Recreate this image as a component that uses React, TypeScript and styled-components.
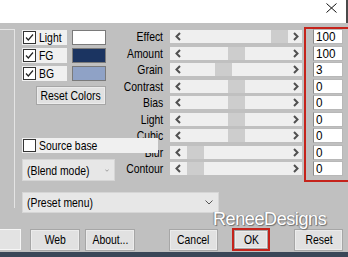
import styled, { createGlobalStyle } from 'styled-components';

const GlobalStyle = createGlobalStyle`
  html, body {
    margin: 0;
    padding: 0;
    background: #3a4758;
  }
  body {
    width: 348px;
    height: 257px;
    overflow: hidden;
    font-family: "Liberation Sans", Arial, sans-serif;
    font-size: 13px;
    color: #000;
  }
`;

const Window = styled.div`
  width: 348px;
  height: 252px;
  background: #c0c0c0;
  display: flex;
  flex-direction: column;
  position: relative;
  overflow: hidden;
`;

// the dialog font is a narrow sans; squeeze Liberation Sans to match
const T = styled.span<{ $o?: string; $s?: number }>`
  display: inline-block;
  white-space: nowrap;
  transform: scaleX(${(p) => p.$s || 0.8});
  transform-origin: ${(p) => p.$o || 'left'} center;
`;

const TitleBar = styled.div`
  height: 23px;
  background: #fff;
  border-right: 2px solid #4a4a4a;
  box-sizing: border-box;
  display: flex;
  justify-content: flex-end;
  align-items: flex-start;
  padding: 3px 9px 0 0;
`;

const Upper = styled.div`
  display: flex;
  align-items: flex-start;
`;

const EdgeBox = styled.div`
  flex: none;
  width: 15px;
  height: 179px;
  margin-top: 6px;
  border-top: 1px solid #e4e4e4;
  border-right: 1px solid #e4e4e4;
  box-sizing: border-box;
`;

const MainCol = styled.div`
  margin-left: 7px;
  display: flex;
  flex-direction: column;
  margin-top: 4px;
`;

const TopRow = styled.div`
  display: flex;
  align-items: flex-start;
`;

const LeftPanel = styled.div`
  width: 88px;
  padding-top: 3px;
  display: flex;
  flex-direction: column;
  flex: none;
`;

const ColorRow = styled.div`
  display: flex;
  align-items: center;
  height: 15px;
  margin-bottom: 3px;
`;

const CheckStrip = styled.label<{ $w: number }>`
  width: ${(p) => p.$w}px;
  height: 15px;
  background: #f0f0f0;
  display: flex;
  align-items: center;
  gap: 3px;
  padding-left: 1px;
  box-sizing: border-box;
  line-height: 15px;
  position: relative;
  z-index: 1;
  overflow: hidden;
`;

const Box = styled.span`
  width: 13px;
  height: 13px;
  box-sizing: border-box;
  border: 1px solid #333;
  background: #fff;
  display: flex;
  align-items: center;
  justify-content: center;
  flex: none;
`;

const Swatch = styled.div<{ $c: string }>`
  width: 34px;
  height: 15px;
  margin-left: 5px;
  box-sizing: border-box;
  border: 1px solid #7a7a7a;
  background: ${(p) => p.$c};
`;

const Button = styled.button<{ $w: number }>`
  width: ${(p) => p.$w}px;
  height: 22px;
  padding: 0;
  font: inherit;
  color: #000;
  background: #e1e1e1;
  border: 1px solid #a6a6a6;
  box-shadow: inset 0 0 0 1px #ececec;
  flex: none;
  display: flex;
  align-items: center;
  justify-content: center;
  overflow: visible;
`;

const ResetColors = styled(Button)`
  margin: 2px 0 0 14px;
  height: 19px;
`;

const SourceRow = styled.div`
  margin-top: 33px;
`;

const Dropdown = styled.div<{ $w: number; $h: number }>`
  width: ${(p) => p.$w}px;
  height: ${(p) => p.$h}px;
  background: #e7e7e7;
  border: 1px solid #d6d6d6;
  box-sizing: border-box;
  display: flex;
  align-items: center;
  justify-content: space-between;
  padding: 0 5px 0 4px;
`;

const BlendDrop = styled(Dropdown)`
  margin-top: 6px;
`;

const SliderGrid = styled.div`
  display: grid;
  grid-template-columns: 53px 132px;
  grid-auto-rows: 13px;
  column-gap: 7px;
  row-gap: 3.5px;
  padding-top: 3px;
`;

const Label = styled.div`
  text-align: right;
  line-height: 13px;
`;

const Track = styled.div`
  position: relative;
  background: #efefef;
  display: flex;
  align-items: center;
  justify-content: space-between;
  padding: 0 3px 0 5px;
`;

const Thumb = styled.div`
  position: absolute;
  top: 0;
  width: 17px;
  height: 13px;
  background: #cdcdcd;
`;

const ValueBox = styled.div`
  margin-left: 2px;
  width: 46px;
  height: 155px;
  box-sizing: border-box;
  border: 2px solid #c5231b;
  padding: 0 0 0 7px;
  display: flex;
  flex-direction: column;
  gap: 1.5px;
`;

const ValueInput = styled.div`
  width: 30px;
  height: 15px;
  box-sizing: border-box;
  background: #fff;
  border: 1px solid #b8b8b8;
  border-left-color: #8a8a8a;
  line-height: 13px;
  padding-left: 2px;
  flex: none;
`;

const PresetDrop = styled(Dropdown)`
  margin-top: 10px;
`;

const Footer = styled.div`
  display: flex;
  align-items: center;
  margin-top: 15px;
  height: 23px;
`;

const Stub = styled.div`
  width: 21px;
  height: 21px;
  box-sizing: border-box;
  background: #e3e3e3;
  border: 1px solid #f6f6f6;
  border-left: none;
`;

const OkFrame = styled.div`
  margin-left: 14px;
  border: 2px solid #c5231b;
  display: flex;
`;

const OkButton = styled(Button)`
  height: 19px;
`;

const Watermark = styled.div`
  position: absolute;
  left: 213px;
  top: 209px;
  font-size: 18px;
  color: #fff;
  letter-spacing: -0.4px;
  text-shadow: 1px 1px 1px #6e6e6e, -1px 0 1px #8a8a8a;
`;

const Chevron = ({ dir }: { dir: 'l' | 'r' }) => (
  <svg width="6" height="9" viewBox="0 0 6 9">
    <path
      d={dir === 'l' ? 'M5 1 L1.5 4.5 L5 8' : 'M1 1 L4.5 4.5 L1 8'}
      fill="none"
      stroke="#505050"
      strokeWidth="2"
    />
  </svg>
);

const Check = () => (
  <svg width="11" height="11" viewBox="0 0 11 11">
    <path d="M2 5.5 L4.3 8 L9 2.5" fill="none" stroke="#222" strokeWidth="1.2" />
  </svg>
);

const DownArrow = () => (
  <svg width="8" height="5" viewBox="0 0 8 5">
    <path d="M0.5 0.5 L4 4 L7.5 0.5" fill="none" stroke="#555" strokeWidth="1" />
  </svg>
);

const sliders = [
  { name: 'Effect', pos: 101, value: '100' },
  { name: 'Amount', pos: 58, value: '100' },
  { name: 'Grain', pos: 45, value: '3' },
  { name: 'Contrast', pos: 58, value: '0' },
  { name: 'Bias', pos: 58, value: '0' },
  { name: 'Light', pos: 58, value: '0' },
  { name: 'Cubic', pos: 58, value: '0' },
  { name: 'Blur', pos: 17, value: '0' },
  { name: 'Contour', pos: 17, value: '0' },
];

const colors = [
  { name: 'Light', c: '#ffffff' },
  { name: 'FG', c: '#1b3461' },
  { name: 'BG', c: '#8fa2c6' },
];

const App = () => (
  <>
    <GlobalStyle />
    <Window>
      <TitleBar>
        <svg width="11" height="10" viewBox="0 0 11 10">
          <path d="M0.5 0.5 L10.5 9.5 M10.5 0.5 L0.5 9.5" stroke="#111" strokeWidth="1" />
        </svg>
      </TitleBar>
      <Upper>
        <EdgeBox />
        <MainCol>
          <TopRow>
            <LeftPanel>
              {colors.map((c) => (
                <ColorRow key={c.name}>
                  <CheckStrip $w={45}>
                    <Box>
                      <Check />
                    </Box>
                    <T>{c.name}</T>
                  </CheckStrip>
                  <Swatch $c={c.c} />
                </ColorRow>
              ))}
              <ResetColors $w={70}>
                <T $o="center">Reset Colors</T>
              </ResetColors>
              <SourceRow>
                <CheckStrip $w={136}>
                  <Box />
                  <T>Source base</T>
                </CheckStrip>
              </SourceRow>
              <BlendDrop $w={93} $h={22}>
                <T>(Blend mode)</T>
                <DownArrow />
              </BlendDrop>
            </LeftPanel>
            <SliderGrid>
              {sliders.map((s) => (
                <>
                  <Label key={s.name + 'l'}>
                    <T $o="right">{s.name}</T>
                  </Label>
                  <Track key={s.name + 't'}>
                    <Thumb style={{ left: s.pos }} />
                    <Chevron dir="l" />
                    <Chevron dir="r" />
                  </Track>
                </>
              ))}
            </SliderGrid>
            <ValueBox>
              {sliders.map((s) => (
                <ValueInput key={s.name}>
                  <T $s={0.9}>{s.value}</T>
                </ValueInput>
              ))}
            </ValueBox>
          </TopRow>
          <PresetDrop $w={197} $h={21}>
            <T>(Preset menu)</T>
            <DownArrow />
          </PresetDrop>
        </MainCol>
      </Upper>
      <Footer>
        <Stub />
        <Button $w={50} style={{ marginLeft: 9 }}>
          <T $o="center">Web</T>
        </Button>
        <Button $w={50} style={{ marginLeft: 5 }}>
          <T $o="center">About...</T>
        </Button>
        <Button $w={49} style={{ marginLeft: 34 }}>
          <T $o="center">Cancel</T>
        </Button>
        <OkFrame>
          <OkButton $w={34}>
            <T $o="center">OK</T>
          </OkButton>
        </OkFrame>
        <Button $w={49} style={{ marginLeft: 24 }}>
          <T $o="center">Reset</T>
        </Button>
      </Footer>
      <Watermark>ReneeDesigns</Watermark>
    </Window>
  </>
);

export default App;
